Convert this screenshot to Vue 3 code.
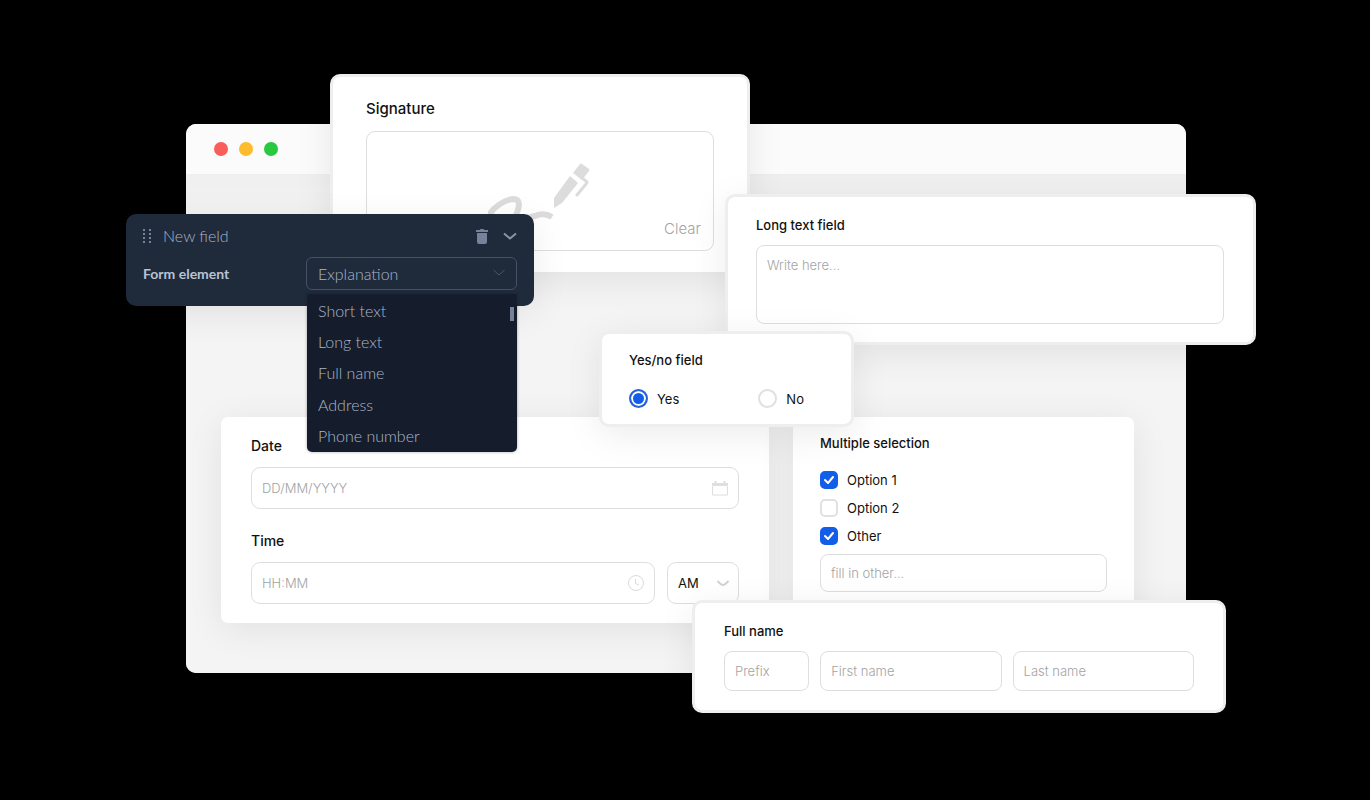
<script setup>
import { ref } from 'vue'

const fieldTypes = ['Short text', 'Long text', 'Full name', 'Address', 'Phone number']
const fieldType = ref('Explanation')
const answer = ref('yes')
const meridiem = ref('AM')
const options = ref([
  { label: 'Option 1', checked: true },
  { label: 'Option 2', checked: false },
  { label: 'Other', checked: true },
])
</script>

<template>
  <main class="page">
    <div class="window">
      <header class="titlebar">
        <span class="dot red"></span>
        <span class="dot yellow"></span>
        <span class="dot green"></span>
      </header>

      <div class="board">
        <section class="card datetime">
          <label class="title" for="date">Date</label>
          <div class="control">
            <input id="date" class="box tall" type="text" placeholder="DD/MM/YYYY" />
            <svg class="icon" width="16" height="16" viewBox="0 0 16 16" fill="none" stroke="#dedede">
              <path d="M.5 5.500h15v9.500H.5z" />
              <path d="M0 4h16" stroke-width="2" />
              <path d="M3.500 1v3M12.500 1v3" stroke-width="2" />
            </svg>
          </div>
          <label class="title second" for="time">Time</label>
          <div class="time-row">
            <div class="control grow">
              <input id="time" class="box tall" type="text" placeholder="HH:MM" />
              <svg class="icon" width="16" height="16" viewBox="0 0 16 16" fill="none" stroke="#dadada">
                <circle cx="8" cy="8" r="7.500" />
                <path d="M7.500 4v4.500l3.500 1.500" />
              </svg>
            </div>
            <div class="control ampm">
              <select v-model="meridiem" class="box tall" aria-label="AM or PM">
                <option>AM</option>
                <option>PM</option>
              </select>
              <svg class="icon chevron" width="12" height="7" viewBox="0 0 12 7" fill="none" stroke="#d2d2d2" stroke-width="2">
                <path d="M.5 1Q4 5 6 5T11.500 1" />
              </svg>
            </div>
          </div>
        </section>

        <section class="card multi">
          <h2 class="title">Multiple selection</h2>
          <label v-for="option in options" :key="option.label" class="choice">
            <input v-model="option.checked" type="checkbox" />
            <svg class="tick" width="18" height="18" viewBox="0 0 18 18" fill="none" stroke="#fff" stroke-width="2" stroke-linecap="round" stroke-linejoin="round">
              <path d="M5 9l3 3 5-6" />
            </svg>
            <span>{{ option.label }}</span>
          </label>
          <input class="box other" type="text" placeholder="fill in other..." aria-label="Other option" />
        </section>
      </div>

      <section class="floating signature">
        <h2 class="title">Signature</h2>
        <div class="pad">
          <svg class="scribble" width="104" height="70" viewBox="0 0 104 70" fill="none" stroke="#dcdcdc">
            <path d="M0 55C4 44 18 36 26 36C35 37 30 49 24 60C34 58 41 54 47 53Q56 49 64 54" stroke-width="6" />
            <path d="M82 13L90 20L74 40L66 45V35Z" fill="#dcdcdc" stroke="none" />
            <path d="M92 1Q93 0 94 1L101 6Q102 7 101 8L94 17L85 10Z" fill="#dcdcdc" stroke="none" />
            <path d="M94 15L98 18Q100 19 98 21L89 32" stroke-width="3" stroke-linecap="round" />
          </svg>
          <button class="clear" type="button">Clear</button>
        </div>
      </section>

      <section class="floating longtext">
        <label class="title" for="long">Long text field</label>
        <textarea id="long" class="box" placeholder="Write here..."></textarea>
      </section>

      <section class="floating yesno">
        <h2 class="title">Yes/no field</h2>
        <div class="answers">
          <label class="choice"><input v-model="answer" type="radio" name="answer" value="yes" /><span>Yes</span></label>
          <label class="choice"><input v-model="answer" type="radio" name="answer" value="no" /><span>No</span></label>
        </div>
      </section>

      <section class="floating fullname">
        <h2 class="title">Full name</h2>
        <div class="names">
          <input class="box" type="text" placeholder="Prefix" aria-label="Prefix" />
          <input class="box" type="text" placeholder="First name" aria-label="First name" />
          <input class="box" type="text" placeholder="Last name" aria-label="Last name" />
        </div>
      </section>

      <section class="editor">
        <div class="editor-head">
          <svg width="8" height="14" viewBox="0 0 8 14" fill="#77839a">
            <path d="M0 0h2v2H0zM6 0h2v2H6zM0 4h2v2H0zM6 4h2v2H6zM0 8h2v2H0zM6 8h2v2H6zM0 12h2v2H0zM6 12h2v2H6z" />
          </svg>
          <h2>New field</h2>
          <button type="button" aria-label="Delete field">
            <svg width="12" height="15" viewBox="0 0 12 15" fill="#76829a">
              <path d="M0 1h3.500L4.500 0h3l1 1H12v2H0zM1 4h10v9q0 2-2 2H3q-2 0-2-2z" />
            </svg>
          </button>
          <button type="button" aria-label="Collapse field">
            <svg width="14" height="9" viewBox="0 0 14 9" fill="none" stroke="#8a95a8" stroke-width="2">
              <path d="M1 1.500l6 5 6-5" />
            </svg>
          </button>
        </div>
        <div class="editor-row">
          <label for="element">Form element</label>
          <div class="picker">
            <select id="element" v-model="fieldType">
              <option>Explanation</option>
              <option v-for="type in fieldTypes" :key="type">{{ type }}</option>
            </select>
            <svg class="picker-arrow" width="12" height="7" viewBox="0 0 12 7" fill="none" stroke="#4b586b">
              <path d="M.5 1L6 6l5.500-5" />
            </svg>
            <ul class="menu">
              <li v-for="type in fieldTypes" :key="type">{{ type }}</li>
            </ul>
          </div>
        </div>
      </section>
    </div>
  </main>
</template>

<style>
body {
  margin: 0;
  background: #000;
}
</style>

<style scoped>
* {
  box-sizing: border-box;
}
.page {
  min-height: 100vh;
  padding: 124px 184px 126px 186px;
  overflow: hidden;
  background: #000;
  color: #111;
  font-family: Inter, "Liberation Sans", sans-serif;
  font-size: 13px;
}
.window {
  position: relative;
  border-radius: 10px;
  background: #f4f4f4;
}
.titlebar {
  display: flex;
  align-items: center;
  gap: 11px;
  height: 50px;
  padding-left: 28px;
  border-radius: 10px 10px 0 0;
  background: #fbfbfb;
}
.dot {
  width: 14px;
  height: 14px;
  border-radius: 50%;
}
.red { background: #fa5e5a; }
.yellow { background: #fdbb2e; }
.green { background: #28c840; }
.board {
  display: grid;
  grid-template-columns: 548fr 341fr;
  gap: 24px;
  padding: 243px 52px 50px 35px;
  overflow: hidden;
  border-radius: 0 0 10px 10px;
  background: linear-gradient(#efefef, #f4f4f4 50px);
}
.card {
  border-radius: 7px;
  background: #fff;
  box-shadow: 0 6px 36px rgba(0, 0, 0, 0.08);
}
.title {
  display: block;
  margin: 0;
  color: #111;
  font-size: 13px;
  line-height: 20px;
  font-weight: 500;
}
.box {
  display: block;
  width: 100%;
  height: 40px;
  margin: 0;
  padding: 0 10px;
  border: 1px solid #dedede;
  border-radius: 8px;
  outline: 0;
  background: transparent;
  color: #111;
  font: inherit;
}
.box::placeholder {
  color: #a3a3a3;
  font-weight: 300;
  opacity: 1;
}
.tall {
  height: 42px;
  border-radius: 9px;
}
.datetime {
  padding: 19px 30px 19px;
}
.datetime .title {
  margin-bottom: 11px;
  font-size: 14px;
}
.datetime .second {
  margin-top: 22px;
}
.control {
  position: relative;
}
.grow {
  flex: 1;
}
.icon {
  position: absolute;
  top: 13px;
  right: 11px;
  pointer-events: none;
}
.time-row {
  display: flex;
  gap: 12px;
}
.ampm {
  width: 72px;
}
select {
  appearance: none;
}
.chevron {
  top: 18px;
  right: 10px;
}
.multi {
  padding: 16px 27px;
}
.multi .title {
  margin-bottom: 13px;
}
.choice {
  position: relative;
  display: flex;
  align-items: center;
  gap: 9px;
}
.multi .choice {
  height: 28px;
}
.choice input {
  appearance: none;
  width: 18px;
  height: 18px;
  margin: 0;
  border: 2px solid #e0e0e0;
  border-radius: 5px;
}
.choice input[type="checkbox"]:checked {
  border-color: #125ee8;
  background: #125ee8;
}
.choice input[type="radio"] {
  width: 19px;
  height: 19px;
  border-radius: 50%;
}
.choice input[type="radio"]:checked {
  border-color: #2563d9;
  background: #125ee8;
  box-shadow: inset 0 0 0 2px #fff;
}
.tick {
  position: absolute;
  left: 0;
  visibility: hidden;
  pointer-events: none;
}
input:checked + .tick {
  visibility: visible;
}
.other {
  height: 38px;
  margin-top: 4px;
}
.floating {
  position: absolute;
  border: 3px solid #eee;
  border-radius: 10px;
  background: #fff;
  box-shadow: 0 8px 36px rgba(0, 0, 0, 0.08);
}
.signature {
  top: -50px;
  left: 144px;
  right: 436px;
  padding: 22px 33px 21px;
  border-bottom: 0;
  border-radius: 10px 10px 0 0;
}
.signature .title {
  margin-bottom: 12px;
  font-size: 15px;
}
.pad {
  position: relative;
  height: 120px;
  border: 1px solid #dedede;
  border-radius: 9px;
}
.scribble {
  position: absolute;
  top: 31px;
  left: 121px;
}
.clear {
  position: absolute;
  right: 12px;
  bottom: 11px;
  padding: 0;
  border: 0;
  background: none;
  color: #a3a3a3;
  font: 300 15px/20px Inter, sans-serif;
}
.longtext {
  top: 70px;
  left: 539px;
  right: -70px;
  padding: 18px 29px 18px 28px;
}
.longtext .title {
  margin-bottom: 10px;
}
.longtext .box {
  height: 79px;
  padding-top: 10px;
  line-height: 18px;
  resize: none;
}
.yesno {
  top: 207px;
  left: 413px;
  right: 332px;
  padding: 16px 26px 16px 27px;
}
.answers {
  display: grid;
  grid-template-columns: 132fr 68fr;
  margin-top: 19px;
}
.fullname {
  top: 476px;
  left: 506px;
  right: -40px;
  padding: 18px 29px 19px;
}
.names {
  display: grid;
  grid-template-columns: 85fr 181fr 181fr;
  gap: 11px;
  margin-top: 10px;
}
.editor {
  position: absolute;
  top: 90px;
  left: -60px;
  width: 408px;
  padding: 12px 17px 16px;
  border-radius: 10px;
  background: #1f2a3b;
  box-shadow: 0 8px 36px rgba(0, 0, 0, 0.08);
  color: #abb6c7;
  font-family: Lato, sans-serif;
}
.editor-head {
  display: flex;
  align-items: center;
  height: 20px;
}
.editor h2 {
  flex: 1;
  margin: 0 0 0 12px;
  font-size: 16px;
  line-height: 20px;
  font-weight: 300;
}
.editor button {
  display: flex;
  margin-left: 15px;
  padding: 0;
  border: 0;
  background: none;
}
.editor-row {
  display: flex;
  align-items: center;
  justify-content: space-between;
  margin-top: 11px;
}
.editor-row label {
  color: #b9c3d2;
  font-size: 14px;
  font-weight: 700;
}
.picker {
  position: relative;
  width: 211px;
}
.picker select {
  display: block;
  width: 100%;
  height: 33px;
  padding: 0 11px;
  border: 1px solid #455266;
  border-radius: 6px;
  background: transparent;
  color: #abb6c7;
  font: 300 16px/20px Lato, sans-serif;
}
.picker-arrow {
  position: absolute;
  top: 12px;
  right: 12px;
  pointer-events: none;
}
.menu {
  position: absolute;
  top: 37px;
  left: 1px;
  right: 0;
  display: grid;
  grid-auto-rows: 1fr;
  align-items: center;
  height: 158px;
  margin: 0;
  padding: 1px 0 0 11px;
  border-radius: 2px 2px 5px 5px;
  background: #151d2d;
  box-shadow: 0 0 3px rgba(21, 29, 45, 0.4);
  font-size: 16px;
  font-weight: 300;
  line-height: 20px;
  list-style: none;
}
.menu::after {
  content: "";
  position: absolute;
  top: 13px;
  right: 3px;
  width: 4px;
  height: 14px;
  background: #76829a;
}
</style>
